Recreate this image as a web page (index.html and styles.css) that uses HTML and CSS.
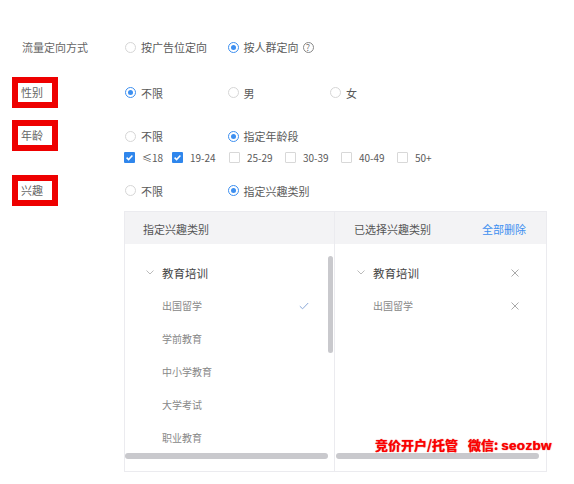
FILE: index.html
```html
<!DOCTYPE html>
<html lang="zh">
<head>
<meta charset="utf-8">
<link rel="stylesheet" href="styles.css">
</head>
<body>
<div class="form">
  <div class="row row-mode">
    <div class="label"><span class="plain">流量定向方式</span></div>
    <div class="opts">
      <label class="radio"><i class="dot"></i>按广告位定向</label>
      <label class="radio on"><i class="dot"></i>按人群定向<i class="help">?</i></label>
    </div>
  </div>

  <div class="row row-gender">
    <div class="label"><span class="mark">性别</span></div>
    <div class="opts">
      <label class="radio on"><i class="dot"></i>不限</label>
      <label class="radio"><i class="dot"></i>男</label>
      <label class="radio"><i class="dot"></i>女</label>
    </div>
  </div>

  <div class="row row-age">
    <div class="label"><span class="mark">年龄</span></div>
    <div class="col">
      <div class="opts line">
        <label class="radio"><i class="dot"></i>不限</label>
        <label class="radio on"><i class="dot"></i>指定年龄段</label>
      </div>
      <div class="checks">
        <label class="check on"><i class="box"><svg viewBox="0 0 11 11" width="11" height="11"><path d="M2.6 5.6 L4.6 7.6 L8.4 3.6" fill="none" stroke="#fff" stroke-width="1.5"/></svg></i>≤18</label>
        <label class="check on"><i class="box"><svg viewBox="0 0 11 11" width="11" height="11"><path d="M2.6 5.6 L4.6 7.6 L8.4 3.6" fill="none" stroke="#fff" stroke-width="1.5"/></svg></i>19-24</label>
        <label class="check"><i class="box"></i>25-29</label>
        <label class="check"><i class="box"></i>30-39</label>
        <label class="check"><i class="box"></i>40-49</label>
        <label class="check"><i class="box"></i>50+</label>
      </div>
    </div>
  </div>

  <div class="row row-interest">
    <div class="label"><span class="mark">兴趣</span></div>
    <div class="opts">
      <label class="radio"><i class="dot"></i>不限</label>
      <label class="radio on"><i class="dot"></i>指定兴趣类别</label>
    </div>
  </div>

  <div class="panel">
    <div class="pane pane-left">
      <div class="pane-head"><span>指定兴趣类别</span></div>
      <div class="pane-body">
        <div class="item parent"><span class="chev"><svg viewBox="0 0 8 5" width="8" height="5"><path d="M0.5 0.5 L4 4 L7.5 0.5" fill="none" stroke="#bbb" stroke-width="1"/></svg></span>教育培训</div>
        <div class="item child"><span>出国留学</span><svg class="tick" viewBox="0 0 10 8" width="10" height="8"><path d="M0.8 4.2 L3.6 6.8 L9.2 1" fill="none" stroke="#8aa8d8" stroke-width="1"/></svg></div>
        <div class="item child"><span>学前教育</span></div>
        <div class="item child"><span>中小学教育</span></div>
        <div class="item child"><span>大学考试</span></div>
        <div class="item child"><span>职业教育</span></div>
        <div class="vbar"></div>
        <div class="hbar"></div>
      </div>
    </div>
    <div class="pane pane-right">
      <div class="pane-head"><span>已选择兴趣类别</span><a class="clear">全部删除</a></div>
      <div class="pane-body">
        <div class="item parent"><span class="chev"><svg viewBox="0 0 8 5" width="8" height="5"><path d="M0.5 0.5 L4 4 L7.5 0.5" fill="none" stroke="#bbb" stroke-width="1"/></svg></span><span class="grow">教育培训</span><svg class="x" viewBox="0 0 8 8" width="8" height="8"><path d="M0.5 0.5 L7.5 7.5 M7.5 0.5 L0.5 7.5" stroke="#aaa" stroke-width="1"/></svg></div>
        <div class="item child"><span class="grow">出国留学</span><svg class="x" viewBox="0 0 8 8" width="8" height="8"><path d="M0.5 0.5 L7.5 7.5 M7.5 0.5 L0.5 7.5" stroke="#aaa" stroke-width="1"/></svg></div>
        <div class="hbar"></div>
      </div>
    </div>
    <div class="watermark">竞价开户/托管<span class="gap"></span>微信: <span class="latin">seozbw</span></div>
  </div>
</div>
</body>
</html>
```

FILE: styles.css
```css
* { box-sizing: border-box; }
html, body { margin: 0; padding: 0; background: #fff; }
body {
  width: 574px;
  height: 484px;
  overflow: hidden;
  font-family: "Noto Sans CJK SC", "Noto Sans", sans-serif;
  font-size: 11px;
  color: #555;
}
.form { padding: 37px 0 0 12px; }
.row { display: flex; align-items: center; }
.row-mode { height: 20px; }
.row-gender { margin-top: 20px; height: 31px; }
.row-age { margin-top: 12px; align-items: flex-start; }
.row-interest { margin-top: 12px; height: 31px; }

.label { width: 112px; flex: none; }
.plain { display: block; padding-left: 10px; color: #666; line-height: 20px; }
.mark {
  display: inline-block;
  border: 6px solid #ee0000;
  width: 46px;
  height: 31px;
  padding-left: 3px;
  line-height: 19px;
  color: #666;
  background: #fff;
}
.col { display: flex; flex-direction: column; }
.opts { display: flex; align-items: center; padding-left: 1px; }
.opts.line { height: 32px; }
.radio {
  display: flex;
  align-items: center;
  width: 102.5px;
  line-height: 16px;
  color: #5a5a5a;
  white-space: nowrap;
}
.dot {
  width: 11px;
  height: 11px;
  border-radius: 50%;
  border: 1px solid #d6d6d6;
  margin-right: 5px;
  flex: none;
  position: relative;
}
.radio.on .dot { border-color: #3d8ff0; }
.radio.on .dot::after {
  content: "";
  position: absolute;
  left: 2px; top: 2px;
  width: 5px; height: 5px;
  border-radius: 50%;
  background: #3d8ff0;
}
.help {
  display: inline-flex;
  align-items: center;
  justify-content: center;
  width: 11px;
  height: 11px;
  border: 1px solid #888;
  border-radius: 50%;
  font-style: normal;
  font-size: 9px;
  line-height: 9px;
  color: #777;
  margin-left: 4px;
}
.checks {
  display: grid;
  grid-template-columns: 48px 57px 56px 56px 56px auto;
  height: 11px;
  align-items: center;
}
.check {
  display: flex;
  align-items: center;
  font-size: 10px;
  line-height: 11px;
  color: #5a5a5a;
  white-space: nowrap;
}
.box {
  width: 11px;
  height: 11px;
  border: 1px solid #d8d8d8;
  border-radius: 1px;
  margin-right: 7px;
  flex: none;
  display: flex;
}
.check.on .box { border: none; background: #2f86ec; }

.panel {
  margin: 5px 0 0 112px;
  width: 423px;
  height: 261px;
  border: 1px solid #ebebef;
  display: flex;
  position: relative;
}
.pane { position: relative; display: flex; flex-direction: column; }
.pane-left { width: 210px; border-right: 1px solid #ebebef; }
.pane-right { flex: 1; }
.pane-head {
  height: 32px;
  padding-top: 2px;
  background: #f3f3f5;
  display: flex;
  align-items: center;
  justify-content: space-between;
  padding-right: 20px;
  padding-left: 18px;
  color: #555;
}
.pane-right .pane-head { padding-left: 19px; }
.clear { color: #3d8ff0; }
.pane-body {
  position: relative;
  flex: 1;
  padding-top: 12px;
  overflow: hidden;
}
.item {
  height: 33px;
  display: flex;
  align-items: center;
}
.parent { padding-left: 20px; color: #444; font-size: 11.5px; }
.chev { width: 16px; margin-left: 1px; display: flex; align-items: center; }
.child { padding-left: 37px; padding-right: 25px; color: #888; font-size: 10px; justify-content: space-between; }
.pane-right .child { padding-left: 38px; }
.pane-right .item { padding-right: 27px; }
.pane-right .parent { padding-left: 21px; }
.grow { flex: 1; }
.tick { flex: none; }
.x { flex: none; }
.vbar {
  position: absolute;
  right: 1px;
  top: 12px;
  width: 5px;
  height: 97px;
  border-radius: 3px;
  background: #c9c9cd;
}
.hbar {
  position: absolute;
  left: 0;
  bottom: 12px;
  width: 203px;
  height: 6px;
  border-radius: 3px;
  background: #c9c9cd;
}
.pane-right .hbar { left: 1px; }
.watermark {
  position: absolute;
  left: 250px;
  top: 224px;
  font-weight: 700;
  font-size: 13px;
  line-height: 17px;
  color: #f00;
  white-space: nowrap;
  text-shadow: 0 0 1px #c00;
}
.gap { display: inline-block; width: 10px; }
.latin { font-family: "Liberation Sans", sans-serif; font-size: 13.5px; letter-spacing: 0.3px; }
```
